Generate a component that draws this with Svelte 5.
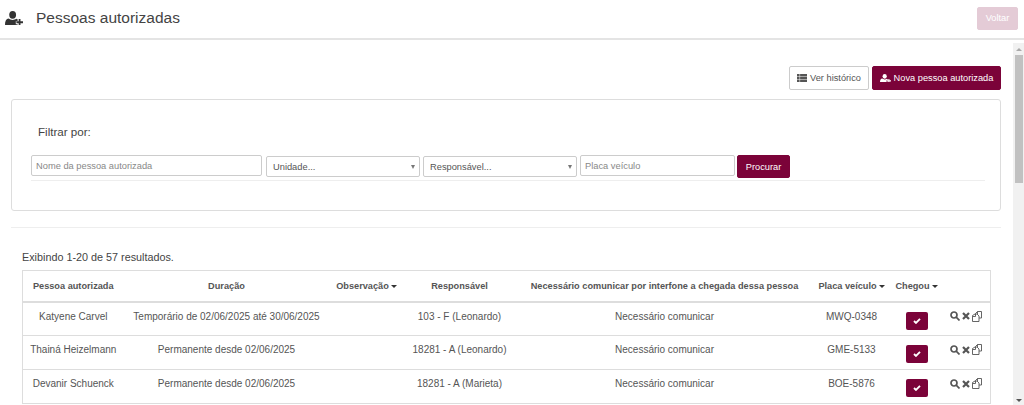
<script>
  const rows = [
    { nome: 'Katyene Carvel', duracao: 'Temporário de 02/06/2025 até 30/06/2025', resp: '103 - F (Leonardo)', placa: 'MWQ-0348' },
    { nome: 'Thainá Heizelmann', duracao: 'Permanente desde 02/06/2025', resp: '18281 - A (Leonardo)', placa: 'GME-5133' },
    { nome: 'Devanir Schuenck', duracao: 'Permanente desde 02/06/2025', resp: '18281 - A (Marieta)', placa: 'BOE-5876' }
  ];
</script>

{#snippet userPlus(size)}
  <svg class="uicon" width={size} height={size * 0.8} viewBox="0 0 20 16" fill="currentColor">
    <ellipse cx="8.500" cy="4.300" rx="3.800" ry="4.300"/>
    <path d="M1 16c-.6 0-1-.4-1-1 0-3.600 1.400-6.400 4-6.600 1.200 1 2.800 1.500 4.500 1.500 1.600 0 3-.5 4-1.300.6.100 1.100.300 1.500.700v2H12v3.500h2V16z"/>
    <path d="M15.200 9h2v2.500H20v2h-2.800V16h-2v-2.500h-2.500v-2h2.500z"/>
  </svg>
{/snippet}

{#snippet caret()}
  <span class="caret"></span>
{/snippet}

<div class="page">
  <header class="topbar">
    <div class="title">
      <span class="title-icon">{@render userPlus(18)}</span>
      <h1>Pessoas autorizadas</h1>
    </div>
    <button class="btn primary disabled">Voltar</button>
  </header>

  <div class="body">
    <main class="content">
      <div class="actions">
        <button class="btn outline">
          <svg width="10" height="8" viewBox="0 0 10 8" fill="#555"><path d="M0 0h2.600v2.300H0zM3.100 0H10v2.300H3.100zM0 2.850h2.600v2.300H0zM3.100 2.850H10v2.300H3.100zM0 5.700h2.600V8H0zM3.100 5.700H10V8H3.100z"/></svg>
          Ver histórico
        </button>
        <button class="btn primary">{@render userPlus(11)} Nova pessoa autorizada</button>
      </div>

      <section class="filter">
        <div class="filter-label">Filtrar por:</div>
        <div class="filter-row">
          <input class="f-name" placeholder="Nome da pessoa autorizada" />
          <div class="select"><span>Unidade...</span><i></i></div>
          <div class="select"><span>Responsável...</span><i></i></div>
          <input class="f-plate" placeholder="Placa veículo" />
          <button class="btn primary search">Procurar</button>
        </div>
      </section>

      <hr class="sep" />

      <p class="summary">Exibindo 1-20 de 57 resultados.</p>

      <table>
        <colgroup>
          <col class="c1" /><col class="c2" /><col class="c3" /><col class="c4" />
          <col class="c5" /><col class="c6" /><col class="c7" /><col class="c8" />
        </colgroup>
        <thead>
          <tr>
            <th>Pessoa autorizada</th>
            <th>Duração</th>
            <th>Observação{@render caret()}</th>
            <th>Responsável</th>
            <th>Necessário comunicar por interfone a chegada dessa pessoa</th>
            <th>Placa veículo{@render caret()}</th>
            <th>Chegou{@render caret()}</th>
            <th></th>
          </tr>
        </thead>
        <tbody>
          {#each rows as r}
            <tr>
              <td>{r.nome}</td>
              <td>{r.duracao}</td>
              <td></td>
              <td>{r.resp}</td>
              <td>Necessário comunicar</td>
              <td>{r.placa}</td>
              <td class="check-cell">
                <span class="check">
                  <svg width="8" height="6" viewBox="0 0 9 7" fill="none" stroke="#fff" stroke-width="2.200"><path d="M1 3.500l2.300 2.200L8 1"/></svg>
                </span>
              </td>
              <td>
                <div class="ops">
                  <svg width="10" height="10" viewBox="0 0 10 10" fill="none" stroke="#555" stroke-width="1.700"><circle cx="4" cy="4" r="3"/><path d="M6.200 6.200L9.500 9.500"/></svg>
                  <svg width="8" height="8" viewBox="0 0 8 8" fill="none" stroke="#555" stroke-width="2.200"><path d="M1 1l6 6M7 1L1 7"/></svg>
                  <svg width="10" height="11" viewBox="0 0 10 11" fill="none" stroke="#555" stroke-width=".9"><path d="M3.500 3.500V2.500L5.500.5h4v6.500H7M.5 4.500L3 3h2l2 2v5.500H.5zM3.500 3v2.500H1M5.500.5V3"/></svg>
                </div>
              </td>
            </tr>
          {/each}
        </tbody>
      </table>
    </main>

    <aside class="scrollbar">
      <span class="arrow up"></span>
      <span class="thumb"></span>
      <span class="arrow down"></span>
    </aside>
  </div>
</div>

<style>
  :global(body) {
    margin: 0;
    background: #fff;
    font-family: "Liberation Sans", Arial, sans-serif;
    color: #555;
  }
  .page {
    height: 405px;
    display: flex;
    flex-direction: column;
    overflow: hidden;
  }
  .topbar {
    height: 40px;
    flex: none;
    box-sizing: border-box;
    border-bottom: 2px solid #e4e4e4;
    display: flex;
    align-items: center;
    justify-content: space-between;
    padding: 0 6px 2px 5px;
  }
  .title {
    display: flex;
    align-items: center;
    gap: 13px;
  }
  .title-icon {
    display: flex;
    color: #333;
  }
  h1 {
    margin: 0;
    font-size: 15.500px;
    font-weight: 400;
    color: #444;
  }
  .uicon { display: block; }
  .body {
    flex: 1;
    min-height: 0;
    display: flex;
  }
  .content {
    flex: 1;
    min-width: 0;
    padding: 26px 12px 0 11px;
    overflow: hidden;
  }
  .btn {
    font: inherit;
    font-size: 9.250px;
    border-radius: 2px;
    display: inline-flex;
    align-items: center;
    justify-content: center;
    gap: 3px;
    box-sizing: border-box;
    padding: 0;
  }
  .primary {
    background: #7b0339;
    color: #fff;
    border: 1px solid #7b0339;
  }
  .disabled {
    width: 41px;
    height: 23px;
    opacity: .2;
  }
  .outline {
    background: #fff;
    border: 1px solid #ccc;
    color: #555;
  }
  .actions {
    display: flex;
    justify-content: flex-end;
    gap: 3px;
    height: 24px;
  }
  .actions .outline { width: 80px; }
  .actions .primary { width: 129px; }
  .filter {
    margin-top: 9px;
    height: 112px;
    box-sizing: border-box;
    border: 1px solid #ddd;
    border-radius: 3px;
    padding: 25px 15px 0 19px;
  }
  .filter-label {
    font-size: 11.600px;
    color: #444;
    margin: 0 0 0 7px;
    line-height: 13px;
  }
  .filter-row {
    margin-top: 17px;
    height: 25px;
    display: flex;
    gap: 3px;
    border-bottom: 1px solid #eee;
  }
  input, .select {
    box-sizing: border-box;
    height: 21px;
    border: 1px solid #ccc;
    border-radius: 2px;
    background: #fff;
    font: inherit;
    font-size: 9.300px;
    color: #555;
    margin: 0;
    outline: none;
  }
  input { padding: 0 4px; }
  input::placeholder { color: #888; opacity: 1; }
  .f-name { width: 231px; margin-right: 1px; }
  .f-plate { width: 155px; margin-right: -1px; }
  .select {
    width: 154px;
    height: 21px;
    margin-top: 1px;
    display: flex;
    align-items: center;
    justify-content: space-between;
    padding: 0 4px 0 6px;
  }
  .select i {
    width: 0;
    height: 0;
    border-left: 2.500px solid transparent;
    border-right: 2.500px solid transparent;
    border-top: 4px solid #777;
  }
  .search {
    width: 53px;
    height: 23px;
  }
  .sep {
    margin: 16px 0 0;
    border: 0;
    border-top: 1px solid #eee;
  }
  .summary {
    margin: 23px 0 0 11px;
    font-size: 10.800px;
    line-height: 13px;
    color: #444;
  }
  table {
    margin: 6px 0 0 11px;
    width: 968px;
    table-layout: fixed;
    border-collapse: collapse;
    font-size: 10px;
    border: 1px solid #ddd;
    border-bottom: 0;
  }
  .c1 { width: 101px; }
  .c2 { width: 206px; }
  .c3 { width: 74px; }
  .c4 { width: 112px; }
  .c5 { width: 298px; }
  .c6 { width: 76px; }
  .c7 { width: 54px; }
  .c8 { width: 47px; }
  th {
    height: 31px;
    box-sizing: border-box;
    padding: 0;
    font-size: 9.200px;
    font-weight: 700;
    text-align: center;
    border-bottom: 2px solid #ddd;
    color: #555;
    white-space: nowrap;
  }
  td {
    height: 34px;
    padding: 8px 0 0;
    text-align: center;
    vertical-align: top;
    line-height: 12px;
    box-sizing: border-box;
    border-bottom: 1px solid #ddd;
    color: #555;
    white-space: nowrap;
  }
  .caret {
    display: inline-block;
    width: 0;
    height: 0;
    margin-left: 2px;
    vertical-align: middle;
    border-left: 3px solid transparent;
    border-right: 3px solid transparent;
    border-top: 3px solid #333;
  }
  .check-cell { padding-top: 9px; }
  .check {
    display: inline-flex;
    align-items: center;
    justify-content: center;
    width: 22px;
    height: 18px;
    background: #7b0339;
    border-radius: 2px;
  }
  .ops {
    display: flex;
    align-items: center;
    gap: 2px;
    padding-left: 6px;
  }
  .ops svg { flex: none; }
  .scrollbar {
    width: 11px;
    flex: none;
    margin-top: 3px;
    background: #f1f1f1;
    display: flex;
    flex-direction: column;
  }
  .thumb {
    height: 128px;
    margin: 4px 1px 0 2px;
    background: #c1c1c1;
  }
  .arrow {
    width: 0;
    height: 0;
    align-self: center;
    border-left: 3px solid transparent;
    border-right: 3px solid transparent;
  }
  .up {
    margin-top: 5px;
    border-bottom: 3px solid #aaa;
  }
  .down {
    margin-top: auto;
    margin-bottom: 3px;
    border-top: 3px solid #555;
  }
</style>
